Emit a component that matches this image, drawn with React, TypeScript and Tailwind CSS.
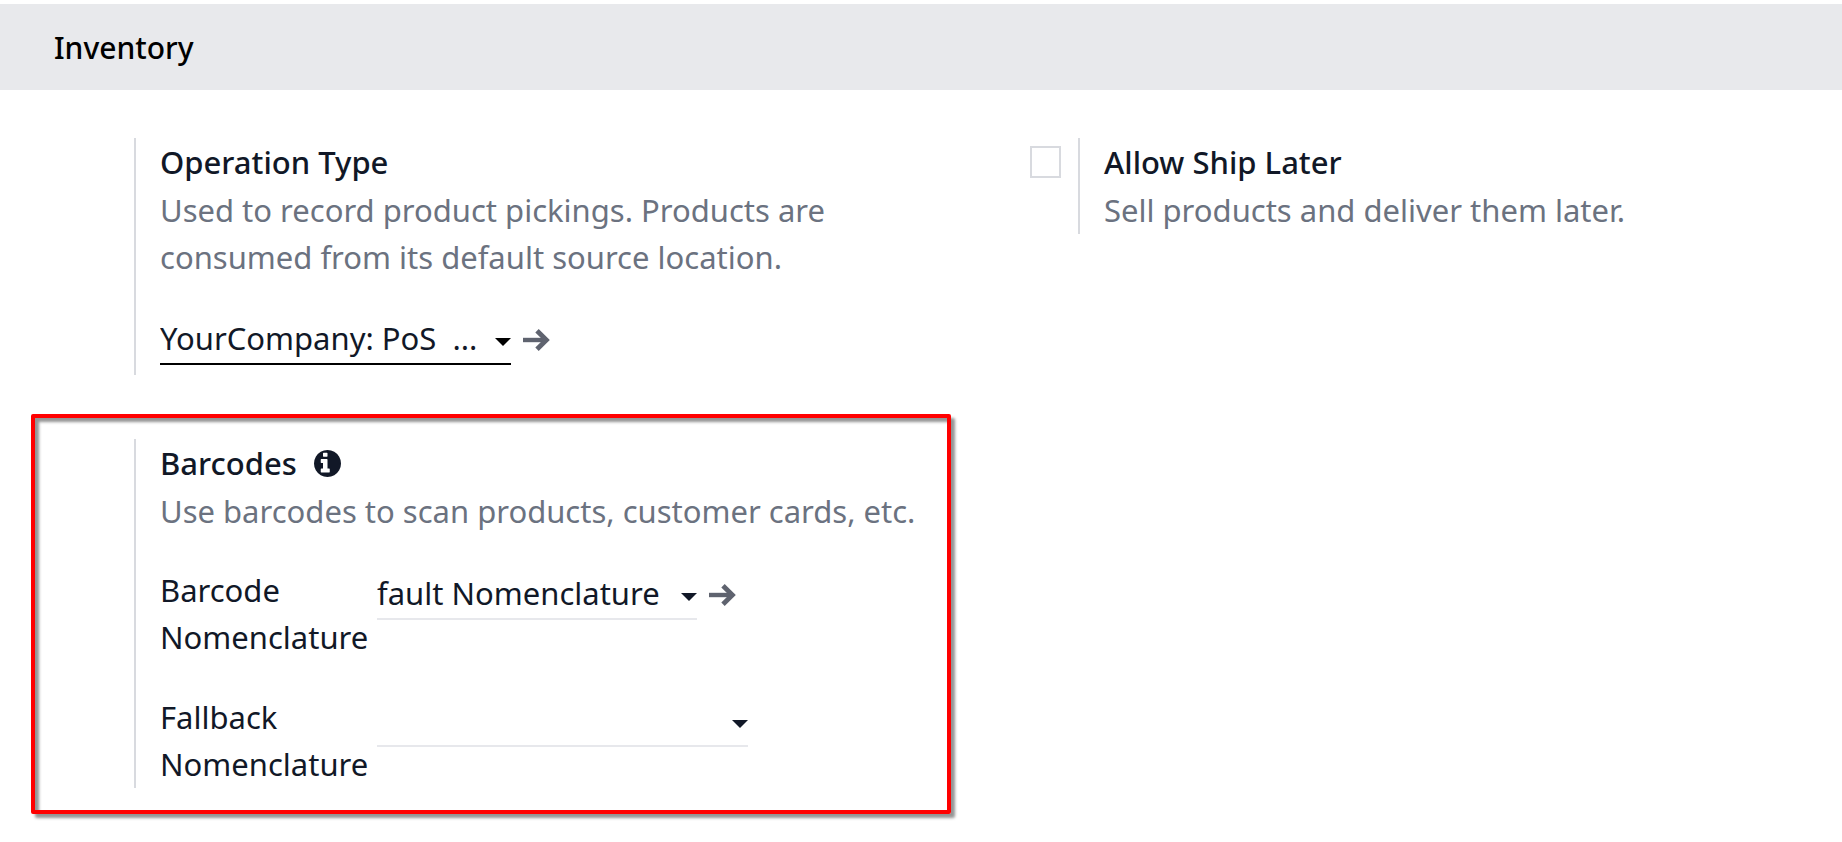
import type { ReactNode } from "react";

function Caret({ className }: { className: string }) {
  return (
    <svg
      aria-hidden="true"
      viewBox="0 0 16 8"
      className={`pointer-events-none absolute right-0 top-6 h-2 w-4 ${className}`}
    >
      <path d="M0 0h16L8 8z" fill="currentColor" />
    </svg>
  );
}

function OpenButton({ label }: { label: string }) {
  return (
    <button type="button" aria-label={label} className="ml-3 mt-[14px] h-6 w-7 text-[#5f636f]">
      <svg viewBox="0 0 28 24" className="h-6 w-7" fill="none" stroke="currentColor">
        <path d="M0 12H24" strokeWidth="4.4" />
        <path d="M14 2.7L23.4 12L14 21.3" strokeWidth="4.8" />
      </svg>
    </button>
  );
}

function InfoIcon() {
  return (
    <svg viewBox="128 128 1536 1536" className="h-[27px] w-[27px]" fill="currentColor" role="img" aria-label="Info">
      <path d="M1024 1376v-160q0-14-9-23t-23-9h-96v-512q0-14-9-23t-23-9h-320q-14 0-23 9t-9 23v160q0 14 9 23t23 9h96v320h-96q-14 0-23 9t-9 23v160q0 14 9 23t23 9h448q14 0 23-9t9-23zM896 480v-160q0-14-9-23t-23-9h-192q-14 0-23 9t-9 23v160q0 14 9 23t23 9h192q14 0 23-9t9-23zM1664 896q0 209-103 385.5t-279.5 279.5-385.5 103-385.5-103-279.5-279.5-103-385.5 103-385.5 279.5-279.5 385.5-103 385.5 103 279.5 279.5 103 385.5z" />
    </svg>
  );
}

type DropdownProps = {
  id: string;
  value: string;
  width: string;
  border?: string;
  caret?: string;
  label?: string;
};

function Dropdown({ id, value, width, border = "border-[#e7e8ec]", caret = "text-[#111827]", label }: DropdownProps) {
  return (
    <div className={`relative ${width}`}>
      <select
        id={id}
        aria-label={label}
        className={`block h-[51px] w-full appearance-none rounded-none border-b-2 bg-transparent p-0 pr-4 leading-[47px] outline-none ${border}`}
      >
        <option>{value}</option>
      </select>
      <Caret className={caret} />
    </div>
  );
}

function Setting({ children, className = "" }: { children: ReactNode; className?: string }) {
  return <div className={`border-l-2 border-[#d8dadf] pl-6 ${className}`}>{children}</div>;
}

export default function App() {
  return (
    <main className="min-h-screen bg-white pb-6 pt-1 font-['Noto_Sans',sans-serif] text-[31px] leading-[47px] text-[#111827]">
      <h2 className="bg-[#e8e9ec] px-[54px] pb-[19px] pt-[21px] text-[30px] font-medium leading-[46px] text-black">
        Inventory
      </h2>

      <div className="flex items-start pt-12">
        <div className="ml-[31px] flex w-[calc(50%-1px)] shrink-0 flex-col gap-[39px]">
          <Setting className="ml-[103px] pb-[10px]">
            <h3 className="mb-px font-medium leading-[48px]">Operation Type</h3>
            <p className="text-[#6b7280]">
              Used to record product pickings. Products are consumed from its default source location.
            </p>
            <div className="mt-[33px] flex">
              <Dropdown
                id="operation-type"
                label="Operation Type"
                value={"YourCompany: PoS\u00a0 ..."}
                width="w-[351px]"
                border="border-black"
                caret="text-black"
              />
              <OpenButton label="Open operation type" />
            </div>
          </Setting>

          <section className="rounded-[2px] border-4 border-[#ff0000] pb-[22px] pl-[99px] pt-[21px] shadow-[4px_4px_3px_rgba(0,0,0,0.42),inset_4px_4px_3px_rgba(0,0,0,0.42)]">
            <Setting>
              <h3 className="mb-px flex items-center gap-[17px] font-medium leading-[48px]">
                Barcodes
                <InfoIcon />
              </h3>
              <p className="whitespace-nowrap text-[#6b7280]">Use barcodes to scan products, customer cards, etc.</p>
              <div className="mt-8 flex items-start">
                <label htmlFor="barcode-nomenclature" className="w-[217px]">
                  Barcode Nomenclature
                </label>
                <div className="flex pt-[2px]">
                  <Dropdown id="barcode-nomenclature" value="fault Nomenclature" width="w-[320px]" />
                  <OpenButton label="Open nomenclature" />
                </div>
              </div>
              <div className="mt-[33px] flex items-start">
                <label htmlFor="fallback-nomenclature" className="w-[217px]">
                  Fallback Nomenclature
                </label>
                <div className="flex pt-[2px]">
                  <Dropdown id="fallback-nomenclature" value="" width="w-[371px]" />
                </div>
              </div>
            </Setting>
          </section>
        </div>

        <div className="ml-[79px] flex items-start">
          <input
            id="ship-later"
            type="checkbox"
            className="mt-2 h-8 w-[31px] appearance-none border-2 border-[#d8dadf] bg-white checked:bg-[#714b67]"
          />
          <Setting className="ml-[17px]">
            <label htmlFor="ship-later" className="mb-px block font-medium leading-[48px]">
              Allow Ship Later
            </label>
            <p className="text-[#6b7280]">Sell products and deliver them later.</p>
          </Setting>
        </div>
      </div>
    </main>
  );
}
